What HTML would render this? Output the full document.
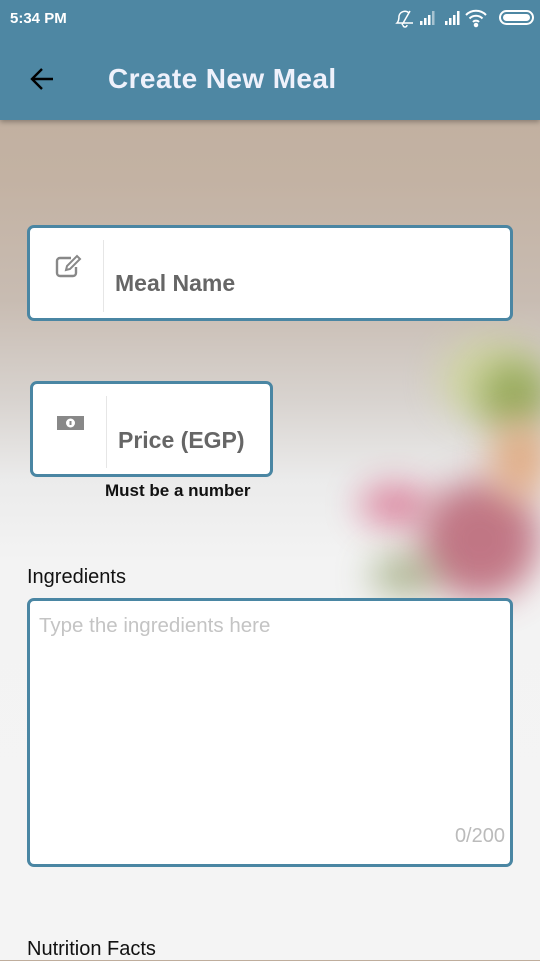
<!DOCTYPE html>
<html><head><meta charset="utf-8"><style>
*{margin:0;padding:0;box-sizing:border-box}
body{width:540px;height:960px;overflow:hidden;font-family:"Liberation Sans",Roboto,sans-serif;position:relative;
background:linear-gradient(180deg,#bfad9c 0px,#c3b2a3 180px,#c8bcb2 300px,#d8d3cf 400px,#ebebeb 480px,#f3f3f3 560px,#f4f4f4 960px)}
.blob{position:absolute;border-radius:50%;filter:blur(18px)}
.bar{position:absolute;left:0;top:0;width:540px;height:120px;background:#4e87a3;box-shadow:0 2px 5px rgba(0,0,0,.3)}
.time{position:absolute;left:10px;top:10px;color:#fff;font-size:15px;font-weight:bold}
.title{position:absolute;left:108px;top:63px;color:#eef1fb;font-size:28px;font-weight:bold;letter-spacing:.4px}
.box{position:absolute;background:#fff;border:3px solid #4a86a3;border-radius:7px}
.sep{position:absolute;width:1px;background:#e6e6e6}
.ph{position:absolute;color:#666;font-size:23px;font-weight:bold}
.lbl{position:absolute;color:#111;font-size:20px}
</style></head><body>
<div class="blob" style="left:440px;top:340px;width:100px;height:80px;background:#cfd79a;opacity:.8"></div>
<div class="blob" style="left:480px;top:360px;width:70px;height:70px;background:#8aa04a;opacity:.8"></div>
<div class="blob" style="left:360px;top:485px;width:70px;height:40px;background:#d86f8e;opacity:.9"></div>
<div class="blob" style="left:420px;top:480px;width:120px;height:120px;background:#b5586a;opacity:.8"></div>
<div class="blob" style="left:490px;top:420px;width:60px;height:80px;background:#e0a070;opacity:.8"></div>
<div class="blob" style="left:370px;top:555px;width:70px;height:40px;background:#7a8a4a;opacity:.6"></div>
<div class="bar">
<div class="time">5:34 PM</div>
<svg style="position:absolute;left:380px;top:6px" width="155" height="24" viewBox="0 0 155 24" fill="none" stroke="#fff" stroke-width="1.5">
<path d="M30 5l-8 14M33 17H17c2-2 2-5 2-7a6 6 0 0 1 10-3M23 19a2 2 0 0 0 4 0"/>
<g fill="#fff" stroke="none"><rect x="40" y="15" width="2.5" height="4"/><rect x="44" y="12" width="2.5" height="7"/><rect x="48" y="9" width="2.5" height="10"/><rect x="52" y="5" width="2.5" height="14" opacity=".5"/>
<rect x="65" y="15" width="2.5" height="4"/><rect x="69" y="12" width="2.5" height="7"/><rect x="73" y="9" width="2.5" height="10"/><rect x="77" y="5" width="2.5" height="14"/></g>
<path d="M86 9a14 14 0 0 1 20 0M89.5 12.5a9 9 0 0 1 13 0M93 16a4 4 0 0 1 6 0" stroke-width="2"/><circle cx="96" cy="19" r="1.5" fill="#fff"/>
<rect x="120" y="5" width="33" height="13" rx="6.5" stroke-width="2"/><rect x="123" y="8" width="27" height="7" rx="3.5" fill="#fff" stroke="none"/>
</svg>
<svg style="position:absolute;left:29px;top:67px" width="26" height="24" viewBox="0 0 26 24" fill="none" stroke="#000" stroke-width="2.4"><path d="M24 12H3M13 2L3 12l10 10"/></svg>
<div class="title">Create New Meal</div>
</div>
<div class="box" style="left:27px;top:225px;width:486px;height:96px">
<svg style="position:absolute;left:24px;top:25px" width="32" height="28" viewBox="0 0 32 28" fill="none" stroke="#888" stroke-width="2.4"><path d="M17 5H6a3 3 0 0 0-3 3v12a3 3 0 0 0 3 3h13a3 3 0 0 0 3-3v-6"/><path d="M12 17l1-4 10-10 3 3-10 10z" stroke-width="2"/></svg>
<div class="sep" style="left:73px;top:12px;height:72px"></div>
<div class="ph" style="left:85px;top:42px">Meal Name</div>
</div>
<div class="box" style="left:30px;top:381px;width:243px;height:96px">
<svg style="position:absolute;left:24px;top:32px" width="28" height="16" viewBox="0 0 28 16"><rect x="0" y="0" width="27" height="14" fill="#888"/><circle cx="13.5" cy="7" r="4.5" fill="#fff"/><rect x="12.5" y="5" width="2" height="4" fill="#888"/></svg>
<div class="sep" style="left:73px;top:12px;height:72px"></div>
<div class="ph" style="left:85px;top:43px">Price (EGP)</div>
</div>
<div style="position:absolute;left:105px;top:481px;font-size:17px;font-weight:bold;color:#111">Must be a number</div>
<div class="lbl" style="left:27px;top:566px">Ingredients</div>
<div class="box" style="left:27px;top:598px;width:486px;height:269px">
<div style="position:absolute;left:9px;top:13px;color:#c4c4c4;font-size:20.5px">Type the ingredients here</div>
<div style="position:absolute;right:5px;bottom:16px;color:#bbb;font-size:20px">0/200</div>
</div>
<div class="lbl" style="left:27px;top:938px">Nutrition Facts</div>
</body></html>
